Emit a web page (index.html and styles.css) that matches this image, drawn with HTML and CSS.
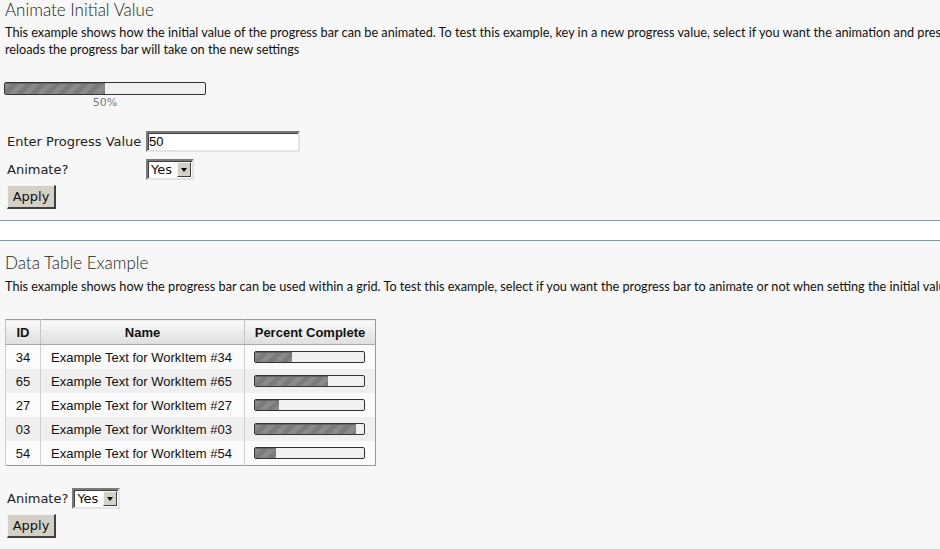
FILE: index.html
```html
<!DOCTYPE html>
<html lang="en">
<head>
<meta charset="utf-8">
<title>Progress Bar Examples</title>
<link rel="stylesheet" href="styles.css">
</head>
<body>
<div class="page">
  <section class="demo demo-first">
    <h2 class="demo-title">Animate Initial Value</h2>
    <p class="demo-desc">This example shows how the initial value of the progress bar can be animated. To test this example, key in a new progress value, select if you want the animation and press apply. When the page<br>reloads the progress bar will take on the new settings</p>
    <div class="pb-block">
      <div class="pb pb-large"><div class="pb-fill" style="width:50%"></div></div>
      <div class="pb-label">50%</div>
    </div>
    <div class="form-grid">
      <label class="form-label">Enter Progress Value</label>
      <span class="textbox">50</span>
      <label class="form-label">Animate?</label>
      <span class="select"><span class="select-val">Yes</span><span class="select-btn"><span class="tri"></span></span></span>
    </div>
    <button class="btn" type="button">Apply</button>
  </section>

  <div class="divider"></div>

  <section class="demo demo-second">
    <h2 class="demo-title">Data Table Example</h2>
    <p class="demo-desc">This example shows how the progress bar can be used within a grid. To test this example, select if you want the progress bar to animate or not when setting the initial value and press apply.</p>
    <table class="grid">
      <thead>
        <tr><th class="c-id">ID</th><th class="c-name">Name</th><th class="c-pct">Percent Complete</th></tr>
      </thead>
      <tbody>
        <tr><td class="c-id">34</td><td class="c-name">Example Text for WorkItem #34</td><td class="c-pct"><div class="pb pb-small"><div class="pb-fill" style="width:34%"></div></div></td></tr>
        <tr><td class="c-id">65</td><td class="c-name">Example Text for WorkItem #65</td><td class="c-pct"><div class="pb pb-small"><div class="pb-fill" style="width:67%"></div></div></td></tr>
        <tr><td class="c-id">27</td><td class="c-name">Example Text for WorkItem #27</td><td class="c-pct"><div class="pb pb-small"><div class="pb-fill" style="width:22%"></div></div></td></tr>
        <tr><td class="c-id">03</td><td class="c-name">Example Text for WorkItem #03</td><td class="c-pct"><div class="pb pb-small"><div class="pb-fill" style="width:93%"></div></div></td></tr>
        <tr><td class="c-id">54</td><td class="c-name">Example Text for WorkItem #54</td><td class="c-pct"><div class="pb pb-small"><div class="pb-fill" style="width:19%"></div></div></td></tr>
      </tbody>
    </table>
    <div class="inline-form">
      <label class="form-label">Animate?</label>
      <span class="select"><span class="select-val">Yes</span><span class="select-btn"><span class="tri"></span></span></span>
    </div>
    <button class="btn" type="button">Apply</button>
  </section>
</div>
</body>
</html>
```

FILE: styles.css
```css
html, body {
  margin: 0;
  padding: 0;
  overflow: hidden;
  background: #f7f7f7;
}
body {
  color: #222;
  font-family: "DejaVu Sans", Verdana, sans-serif;
}
.page {
  width: 1200px;
}
.demo {
  padding: 0 0 0 5px;
}
.demo-first {
  padding-top: 0;
  padding-bottom: 11px;
}
.demo-second {
  padding-top: 12px;
}
.demo-title {
  margin: 0;
  font-family: Lato, "Open Sans", sans-serif;
  font-weight: 300;
  font-size: 17px;
  line-height: 19px;
  color: #222;
}
.demo-desc {
  margin: 5px 0 0 0;
  font-family: Lato, "Open Sans", sans-serif;
  font-size: 12.7px;
  line-height: 17px;
  color: #111;
}
.demo-second .demo-desc {
  margin-top: 6px;
}
.pb-block {
  margin-top: 24px;
  width: 202px;
  margin-left: -1px;
}
.pb {
  border: 1px solid #333;
  border-radius: 2px;
  background: #f0f0f0;
  overflow: hidden;
  box-sizing: border-box;
}
.pb-large {
  height: 13px;
}
.pb-small {
  height: 12px;
  width: 111px;
}
.pb-fill {
  height: 100%;
  background: repeating-linear-gradient(135deg, #8a8a8a 0 5px, #7b7b7b 5px 10px);
  box-shadow: inset 0 1px 0 #666;
}
.pb-label {
  text-align: center;
  font-family: "DejaVu Sans", Verdana, sans-serif;
  font-size: 11px;
  line-height: 12px;
  margin-top: 2px;
  color: #777;
}
.form-grid {
  display: grid;
  grid-template-columns: 139px auto;
  justify-content: start;
  align-items: center;
  row-gap: 7px;
  margin-top: 22px;
  margin-left: 2px;
}
.form-label {
  font-size: 13px;
  color: #222;
}
.textbox {
  display: block;
  box-sizing: border-box;
  width: 154px;
  height: 21px;
  border-style: solid;
  border-width: 2px;
  border-color: #7a7a7a #e4e4e4 #e4e4e4 #7a7a7a;
  box-shadow: inset 1px 1px 0 #404040;
  background: #fff;
  font-family: "Liberation Sans", Arial, sans-serif;
  font-size: 13px;
  line-height: 17px;
  padding-left: 1px;
  color: #000;
}
.select {
  display: inline-flex;
  align-items: center;
  box-sizing: border-box;
  width: 48px;
  height: 21px;
  border-style: solid;
  border-width: 2px;
  border-color: #7a7a7a #e4e4e4 #e4e4e4 #7a7a7a;
  box-shadow: inset 1px 1px 0 #404040;
  background: #fff;
  justify-self: start;
}
.select-val {
  flex: 1;
  font-family: "DejaVu Sans", Verdana, sans-serif;
  font-size: 13px;
  padding-left: 3px;
  color: #111;
}
.select-btn {
  display: flex;
  align-items: center;
  justify-content: center;
  width: 12px;
  height: 13px;
  margin-right: 1px;
  background: #d4d0c8;
  border-style: solid;
  border-width: 1px;
  border-color: #f4f4f4 #404040 #404040 #f4f4f4;
}
.tri {
  width: 0;
  height: 0;
  border-left: 3px solid transparent;
  border-right: 3px solid transparent;
  border-top: 4px solid #000;
}
.btn {
  display: block;
  margin: 5px 0 0 2px;
  width: 49px;
  height: 24px;
  padding: 0;
  background: #d4d0c8;
  border-style: solid;
  border-width: 1px 2px 2px 1px;
  border-color: #f4f4f4 #404040 #404040 #f4f4f4;
  font-family: "DejaVu Sans", Verdana, sans-serif;
  font-size: 13px;
  color: #111;
}
.divider {
  height: 19px;
  background: #fff;
  border-top: 1px solid #6f9fb6;
  border-bottom: 1px solid #6f9fb6;
  margin-top: 0;
}
.grid {
  margin-top: 24px;
  border-collapse: collapse;
  border: 1px solid #9a9a9a;
  font-family: "Liberation Sans", Arial, sans-serif;
  font-size: 13px;
  color: #111;
}
.grid th {
  height: 24px;
  padding: 0;
  font-weight: bold;
  background: linear-gradient(#fafafa, #dedede);
  border-left: 1px solid #c4c4c4;
  border-bottom: 1px solid #a8a8a8;
  text-align: center;
}
.grid td {
  height: 24px;
  padding: 0;
  border-left: 1px solid #cfcfcf;
}
.grid tbody tr:nth-child(odd) td { background: #fbfbfb; }
.grid tbody tr:nth-child(even) td { background: #efefef; }
.grid .c-id { width: 34px; text-align: center; }
.grid .c-name { width: 203px; }
.grid td.c-name { padding-left: 10px; width: 193px; }
.grid .c-pct { width: 130px; }
.grid td.c-pct { padding: 0 10px 0 9px; width: 111px; }
.inline-form {
  display: flex;
  align-items: center;
  gap: 4px;
  margin-top: 22px;
  margin-left: 2px;
}
```
